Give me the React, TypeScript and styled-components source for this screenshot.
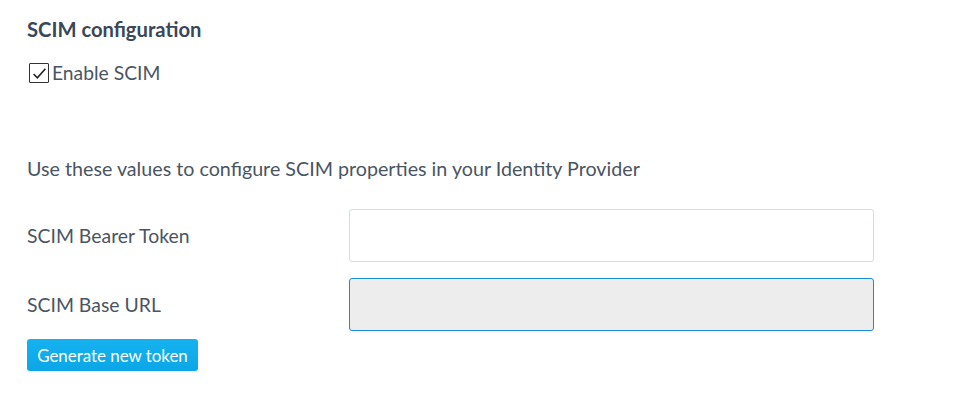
import React from "react";
import styled, { createGlobalStyle } from "styled-components";

const Global = createGlobalStyle`
  html, body { margin: 0; padding: 0; background: #ffffff; }
  body { font-family: Lato, "Open Sans", sans-serif; color: #4a5562; }
`;

const Page = styled.div`
  padding: 17px 27px 0 27px;
  display: flex;
  flex-direction: column;
`;

const Title = styled.h2`
  margin: 0;
  font-size: 20.2px;
  font-weight: 700;
  color: #3a4756;
  line-height: 24px;
`;

const CheckRow = styled.label`
  margin-top: 20px;
  display: flex;
  align-items: center;
  gap: 3px;
  font-size: 19.3px;
  color: #4a5562;
  line-height: 24px;
  padding-left: 2px;
`;

const Box = styled.span`
  width: 18px;
  height: 18px;
  border: 1.5px solid #333;
  display: inline-flex;
  align-items: center;
  justify-content: center;
  box-sizing: content-box;
  border-radius: 1px;
`;

const Description = styled.p`
  margin: 72px 0 0 0;
  font-size: 19.7px;
  line-height: 24px;
  color: #4a5562;
`;

const Form = styled.div`
  margin-top: 28px;
  display: flex;
  flex-direction: column;
  gap: 16px;
`;

const Row = styled.div`
  display: grid;
  grid-template-columns: 322px 525px;
  align-items: center;
`;

const Label = styled.span`
  font-size: 19.4px;
  color: #4a5562;
`;

const Input = styled.div<{ $readonly?: boolean }>`
  height: 53px;
  box-sizing: border-box;
  border-radius: 3px;
  border: 1px solid ${(p) => (p.$readonly ? "#1a8fd0" : "#c8e2ee")};
  background: ${(p) => (p.$readonly ? "#ededed" : "#ffffff")};
`;

const Button = styled.button`
  margin-top: 8px;
  align-self: flex-start;
  height: 32px;
  width: 171px;
  border: none;
  border-radius: 3px;
  background: linear-gradient(#16b2f0, #0aa6e6);
  color: #ffffff;
  font-family: Lato, "Open Sans", sans-serif;
  font-size: 16.9px;
  padding: 0;
`;

export default function App() {
  return (
    <>
      <Global />
      <Page>
        <Title>SCIM configuration</Title>
        <CheckRow>
          <Box>
            <svg width="15" height="15" viewBox="0 0 14 14">
              <path d="M1.5 7.5 L5 11 L12.5 2.5" fill="none" stroke="#222" strokeWidth="1.5" />
            </svg>
          </Box>
          Enable SCIM
        </CheckRow>
        <Description>Use these values to configure SCIM properties in your Identity Provider</Description>
        <Form>
          <Row>
            <Label>SCIM Bearer Token</Label>
            <Input />
          </Row>
          <Row>
            <Label>SCIM Base URL</Label>
            <Input $readonly />
          </Row>
        </Form>
        <Button>Generate new token</Button>
      </Page>
    </>
  );
}
